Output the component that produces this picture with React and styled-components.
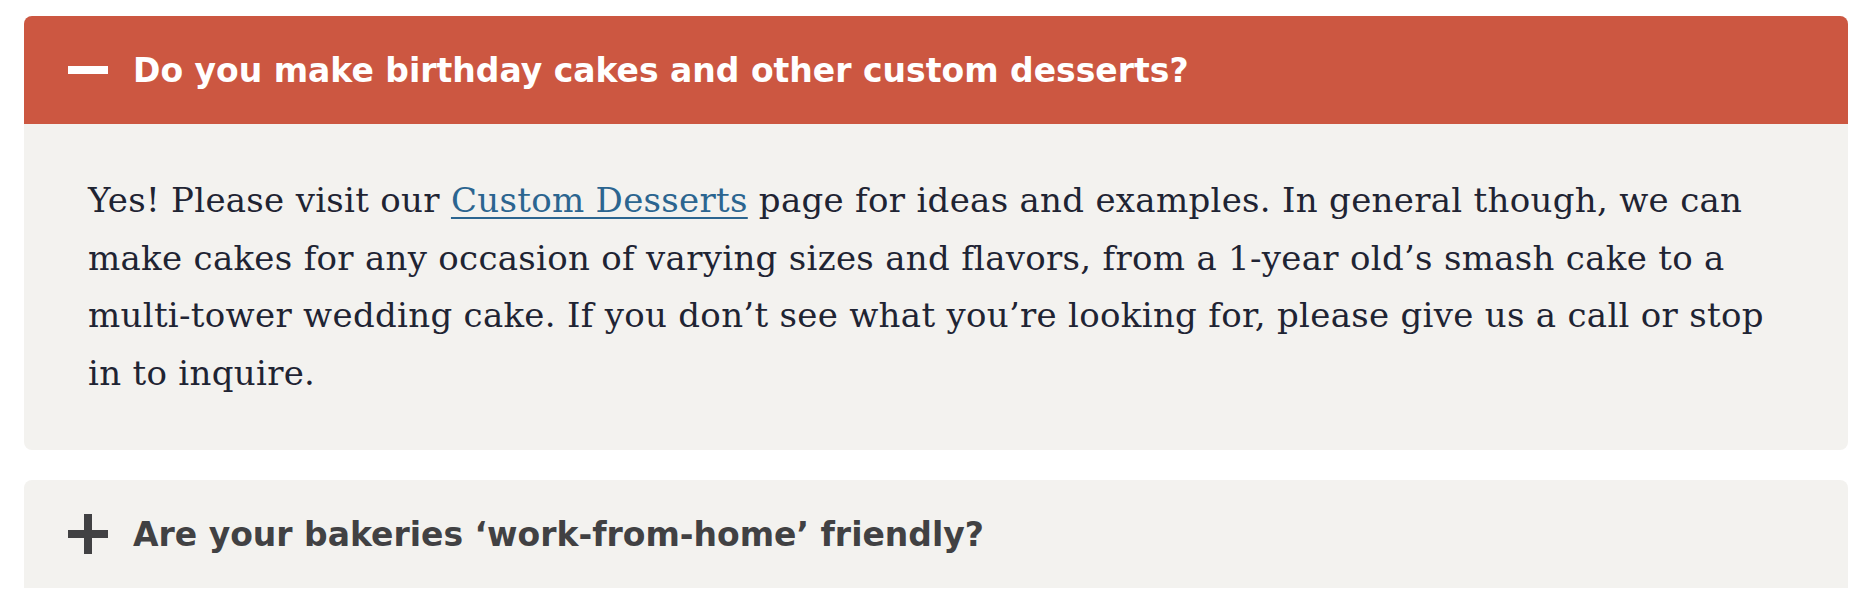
import React, { useState } from "react";
import styled, { createGlobalStyle } from "styled-components";

const Global = createGlobalStyle`
  html, body {
    margin: 0;
    padding: 0;
    background: #ffffff;
  }
`;

const Faq = styled.div`
  display: flex;
  flex-direction: column;
  gap: 30px;
  padding: 16px 18px 0 24px;
`;

const Item = styled.div`
  background: #f3f2ef;
  border-radius: ${(p) => (p.open ? "8px" : "8px 8px 0 0")};
  overflow: hidden;
`;

const Header = styled.button`
  display: flex;
  align-items: center;
  gap: 25px;
  width: 100%;
  height: 108px;
  padding: 0 44px;
  border: none;
  background: ${(p) => (p.open ? "#cc5741" : "#f3f2ef")};
  color: ${(p) => (p.open ? "#ffffff" : "#414143")};
  font-family: "DejaVu Sans", Inter, sans-serif;
  font-weight: 700;
  font-size: 33px;
  letter-spacing: 0;
  text-align: left;
  cursor: pointer;
`;

const Icon = styled.svg`
  flex: none;
  width: 40px;
  height: 40px;
`;

const Body = styled.div`
  padding: 48px 20px 48px 64px;
  font-family: "DejaVu Serif", "Liberation Serif", serif;
  font-size: 34px;
  letter-spacing: 0.3px;
  line-height: 57.5px;
  color: #1f2433;
  white-space: nowrap;
`;

const Link = styled.a`
  color: #2b6590;
  text-decoration: underline;
  text-underline-offset: 5px;
  text-decoration-thickness: 2px;
`;

const ToggleIcon = ({ open }) => (
  <Icon viewBox="0 0 40 40" fill="currentColor">
    <rect x="0" y="16" width="40" height="8" />
    {!open && <rect x="16" y="0" width="8" height="40" />}
  </Icon>
);

const items = [
  {
    q: "Do you make birthday cakes and other custom desserts?",
    a: (
      <>
        Yes! Please visit our <Link href="#">Custom Desserts</Link> page for
        ideas and examples. In general though, we can
        <br />
        make cakes for any occasion of varying sizes and flavors, from a
        1-year old’s smash cake to a
        <br />
        multi-tower wedding cake. If you don’t see what you’re looking for,
        please give us a call or stop
        <br />
        in to inquire.
      </>
    ),
  },
  {
    q: "Are your bakeries ‘work-from-home’ friendly?",
    a: "Absolutely. All of our locations offer free wifi and plenty of seating.",
  },
];

const App = () => {
  const [open, setOpen] = useState(0);
  return (
    <>
      <Global />
      <Faq>
        {items.map((it, i) => (
          <Item key={i} open={open === i}>
            <Header open={open === i} onClick={() => setOpen(open === i ? -1 : i)}>
              <ToggleIcon open={open === i} />
              {it.q}
            </Header>
            {open === i && <Body>{it.a}</Body>}
          </Item>
        ))}
      </Faq>
    </>
  );
};

export default App;
